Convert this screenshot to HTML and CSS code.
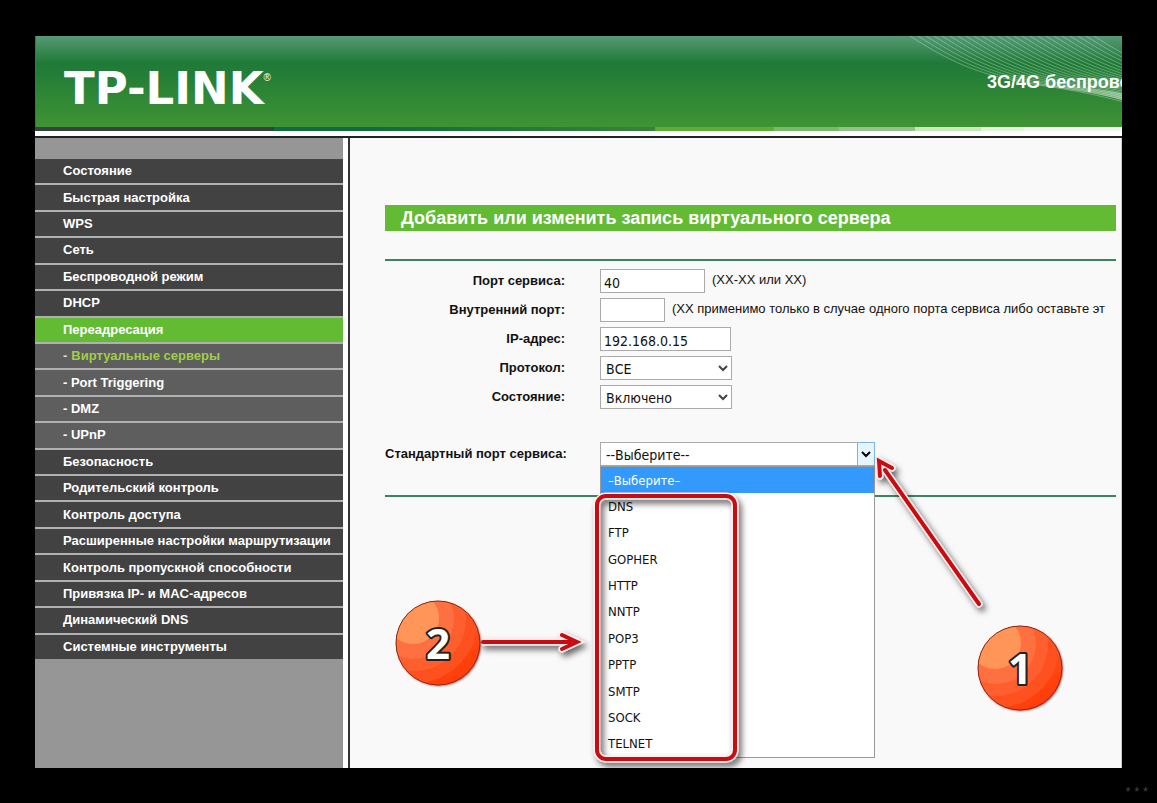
FILE: index.html
```html
<!DOCTYPE html>
<html lang="ru">
<head>
<meta charset="utf-8">
<title>TP-LINK</title>
<link rel="stylesheet" href="styles.css">
</head>
<body>
<div class="frame">
  <header class="banner">
    <svg class="banner-waves" width="220" height="92" viewBox="0 0 220 92" aria-hidden="true">
      <defs>
        <path id="wave" d="M8 0C45 24 75 38 120 46S190 56 250 74"/>
        <g id="waves4"><use href="#wave"/><use href="#wave" x="8"/><use href="#wave" x="16"/><use href="#wave" x="24"/></g>
        <linearGradient id="swoosh" x1="0" x2="1"><stop offset="0" stop-color="#fff" stop-opacity="0"/><stop offset="1" stop-color="#fff" stop-opacity=".4"/></linearGradient>
      </defs>
      <g fill="none" stroke="#fff" stroke-opacity=".3">
        <use href="#waves4"/><use href="#waves4" x="32"/><use href="#waves4" x="64"/><use href="#waves4" x="96"/><use href="#waves4" x="128"/><use href="#waves4" x="160"/>
      </g>
      <path fill="url(#swoosh)" d="M90 40C130 50 170 48 220 57V64C180 52 130 52 90 40Z"/>
    </svg>
    <div class="logo">TP-LINK<sup class="reg">®</sup></div>
    <div class="model">3G/4G беспрово</div>
  </header>
  <div class="stripe"></div>
  <div class="body">
    <nav class="sidebar">
      <ul class="menu">
        <li><a href="#">Состояние</a></li>
        <li><a href="#">Быстрая настройка</a></li>
        <li><a href="#">WPS</a></li>
        <li><a href="#">Сеть</a></li>
        <li><a href="#">Беспроводной режим</a></li>
        <li><a href="#">DHCP</a></li>
        <li><a href="#" class="active">Переадресация</a></li>
        <li><a href="#" class="sub current"><span class="dash">-</span> Виртуальные серверы</a></li>
        <li><a href="#" class="sub">- Port Triggering</a></li>
        <li><a href="#" class="sub">- DMZ</a></li>
        <li><a href="#" class="sub">- UPnP</a></li>
        <li><a href="#">Безопасность</a></li>
        <li><a href="#">Родительский контроль</a></li>
        <li><a href="#">Контроль доступа</a></li>
        <li><a href="#">Расширенные настройки маршрутизации</a></li>
        <li><a href="#">Контроль пропускной способности</a></li>
        <li><a href="#">Привязка IP- и MAC-адресов</a></li>
        <li><a href="#">Динамический DNS</a></li>
        <li><a href="#">Системные инструменты</a></li>
      </ul>
    </nav>
    <main class="content">
      <h1 class="title">Добавить или изменить запись виртуального сервера</h1>
      <form class="form">
        <label for="port">Порт сервиса:</label>
        <div class="field"><input id="port" class="w-port" type="text" value="40"><span>(ХХ-ХХ или ХХ)</span></div>
        <label for="inner">Внутренний порт:</label>
        <div class="field"><input id="inner" class="w-inner" type="text"><span>(ХХ применимо только в случае одного порта сервиса либо оставьте эт</span></div>
        <label for="ip">IP-адрес:</label>
        <div class="field"><input id="ip" class="w-ip" type="text" value="192.168.0.15"></div>
        <label for="proto">Протокол:</label>
        <div class="field"><div class="select"><select id="proto"><option>ВСЕ</option></select><svg class="chevron" width="10" height="7" viewBox="0 0 10 7"><path d="M1 1l4 4 4-4"/></svg></div></div>
        <label for="state">Состояние:</label>
        <div class="field"><div class="select"><select id="state"><option>Включено</option></select><svg class="chevron" width="10" height="7" viewBox="0 0 10 7"><path d="M1 1l4 4 4-4"/></svg></div></div>
        <label for="std" class="spaced">Стандартный порт сервиса:</label>
        <div class="field spaced">
          <div class="select open">
            <select id="std"><option>--Выберите--</option></select>
            <span class="drop"><svg width="10" height="7" viewBox="0 0 10 7"><path d="M1 1l4 4 4-4"/></svg></span>
            <ul class="options" role="listbox" aria-label="Стандартный порт сервиса">
              <li role="option" aria-selected="true">–Выберите–</li>
              <li role="option">DNS</li>
              <li role="option">FTP</li>
              <li role="option">GOPHER</li>
              <li role="option">HTTP</li>
              <li role="option">NNTP</li>
              <li role="option">POP3</li>
              <li role="option">PPTP</li>
              <li role="option">SMTP</li>
              <li role="option">SOCK</li>
              <li role="option">TELNET</li>
            </ul>
          </div>
        </div>
      </form>
    </main>
  </div>
  <svg class="notes" width="1087" height="732" viewBox="35 36 1087 732" aria-hidden="true">
    <defs>
      <filter id="shadow" x="-20%" y="-20%" width="150%" height="150%" filterUnits="userSpaceOnUse"><feDropShadow dx="3" dy="4" stdDeviation="3" flood-color="#000" flood-opacity=".6"/></filter>
      <filter id="ball-shadow" x="-20%" y="-20%" width="150%" height="150%"><feDropShadow dx="1" dy="1" stdDeviation="1" flood-color="#600" flood-opacity=".7"/></filter>
      <clipPath id="disc"><circle r="42"/></clipPath>
      <linearGradient id="base" x1="0" y1="0" x2=".6" y2="1"><stop offset="0" stop-color="#ff6a3c"/><stop offset="1" stop-color="#ff3c08"/></linearGradient>
      <g id="ball">
        <circle r="42" fill="url(#base)" filter="url(#ball-shadow)"/>
        <g clip-path="url(#disc)">
          <circle cx="-24" cy="-24" r="64" fill="#ff501f"/>
          <circle cx="-24" cy="-24" r="52" fill="#ff5e2e"/>
          <circle cx="-24" cy="-24" r="40" fill="#ff7040"/>
          <circle cx="-25" cy="-25" r="26" fill="#ff9558"/>
        </g>
        <circle r="42" fill="none" stroke="#8f2a14"/>
      </g>
      <path id="arrow1" d="M885 470L979 604M892 468L879 461L880 476"/>
      <path id="arrow2" d="M483 642H570M562 635L577 642L562 649"/>
      <rect id="box" x="597" y="496" width="138" height="263" rx="9"/>
    </defs>
    <g class="outline" filter="url(#shadow)"><use href="#arrow1"/><use href="#arrow2"/><use href="#box"/></g>
    <g class="mark"><use href="#arrow1"/><use href="#arrow2"/><use href="#box"/></g>
    <use href="#ball" x="438" y="643"/>
    <use href="#ball" x="1020" y="668"/>
    <text class="digit" x="438" y="659">2</text>
    <text class="digit" x="1020" y="684">1</text>
  </svg>
</div>
<footer class="footer">* * *</footer>
</body>
</html>
```
FILE: styles.css
```css
* { box-sizing: border-box; }
body {
  margin: 0;
  min-height: 100vh;
  display: flex;
  flex-direction: column;
  padding-top: 36px;
  background: #000;
  font-family: "Liberation Sans", Arial, sans-serif;
  font-size: 13px;
  color: #111;
}
ul { list-style: none; margin: 0; padding: 0; }
.frame {
  flex: 1;
  position: relative;
  display: flex;
  flex-direction: column;
  margin: 0 35px;
  overflow: hidden;
  background: #fff;
}
.banner {
  position: relative;
  display: flex;
  justify-content: space-between;
  height: 91px;
  padding-left: 28px;
  overflow: hidden;
  border-left: 1px solid #2e7d3c;
  background: linear-gradient(#559a75 0, #1f7a38 30%, #2a8236 55%, #3f9433 100%);
  color: #fff;
}
.banner-waves { position: absolute; top: 0; right: 0; }
.logo {
  position: relative;
  padding-top: 29px;
  font: bold 45px/48px "DejaVu Sans", sans-serif;
}
.reg {
  position: absolute;
  top: 36px;
  left: 100%;
  font: 10px/12px "Liberation Sans", sans-serif;
}
.model {
  position: relative;
  width: 135px;
  padding-top: 35px;
  white-space: nowrap;
  font-size: 18px;
  line-height: 22px;
  font-weight: bold;
}
.stripe {
  height: 4px;
  background: linear-gradient(90deg, #33453a 0 22%, #0f6a3c 22% 30%, #38823a 57%, #5cae35 57% 68%, #7bb86a 68% 74%, #93c08c 74% 81%, #c8e8b8 81% 87%, #e4f3dc 87% 91%, #f4f4f4 91%);
}
.body {
  flex: 1;
  display: flex;
  margin-top: 5px;
  border-top: 2px solid #222;
}
.sidebar {
  flex: none;
  width: 308px;
  display: grid;
  grid-template-rows: 1fr;
  padding: 21px 0 109px;
  background: #969696;
}
.menu {
  display: grid;
  grid-auto-rows: 1fr;
  gap: 2px;
  background: #b0b0b0;
}
.menu a {
  display: flex;
  align-items: center;
  gap: 4px;
  height: 100%;
  padding-left: 28px;
  background: #424242;
  color: #fff;
  font-weight: bold;
  line-height: 16px;
  text-decoration: none;
}
.menu .active { background: #62bb33; }
.menu .sub { background: #5e5e5e; }
.menu .current { color: #a0cf46; }
.dash { color: #ddd; }
.content {
  flex: 1;
  min-width: 0;
  margin-left: 5px;
  padding: 67px 5px 0 35px;
  border-left: 2px solid #333;
  border-right: 1px solid #ccc;
  background: #f9f9f9;
}
.title {
  margin: 0;
  padding-left: 16px;
  background: #62bb33;
  color: #fff;
  font-size: 18px;
  line-height: 26px;
}
.form {
  display: grid;
  grid-template-columns: 180px minmax(0, 1fr);
  gap: 5px 35px;
  margin-top: 28px;
  padding: 8px 0 29px;
  border: solid #3a8560;
  border-width: 2px 0;
}
.form label {
  line-height: 24px;
  font-weight: bold;
  text-align: right;
  white-space: nowrap;
}
.form .spaced { margin-top: 28px; }
.field {
  display: flex;
  gap: 7px;
  height: 24px;
  white-space: nowrap;
  line-height: 22px;
}
input, select {
  height: 24px;
  margin: 0;
  border: 1px solid #aaa;
  border-radius: 0;
  background: #fff;
  color: #111;
  font: 14px "DejaVu Sans Condensed", "DejaVu Sans", sans-serif;
}
input { flex: none; padding: 3px 3px 0; }
.w-port { width: 105px; }
.w-inner { width: 65px; }
.w-ip { width: 131px; }
.select { position: relative; width: 132px; }
select {
  appearance: none;
  width: 100%;
  padding: 2px 5px 0;
}
.select svg { fill: none; stroke: #444; stroke-width: 2; }
.chevron { position: absolute; right: 4px; top: 9px; }
.open { width: 275px; }
.drop {
  position: absolute;
  top: 0;
  right: 0;
  width: 18px;
  height: 24px;
  display: grid;
  place-items: center;
  border: 1px solid #7fb4dc;
  background: #e4f5fb;
}
.select .drop svg { stroke: #000; }
.options {
  position: absolute;
  top: 100%;
  left: 0;
  width: 100%;
  height: 292px;
  display: grid;
  grid-auto-rows: 1fr;
  border: 1px solid #999;
  background: #fff;
  font: 13px "DejaVu Sans Condensed", "DejaVu Sans", sans-serif;
}
.options li { display: flex; align-items: center; padding-left: 7px; }
.options [aria-selected] { background: #3399fd; color: #fff; }
.notes { position: absolute; top: 0; left: 0; pointer-events: none; }
.outline, .mark { fill: none; stroke-linecap: round; stroke-linejoin: miter; }
.outline { stroke: #ffecec; stroke-width: 7px; }
.mark { stroke: #c80d12; stroke-width: 4px; }
.digit {
  font: bold 42px "Noto Sans", sans-serif;
  text-anchor: middle;
  fill: #fff;
  stroke: #222;
  stroke-width: 4px;
  paint-order: stroke;
  stroke-linejoin: round;
}
.footer {
  height: 35px;
  padding-right: 9px;
  color: #444;
  font-size: 13px;
  line-height: 48px;
  text-align: right;
}
```
